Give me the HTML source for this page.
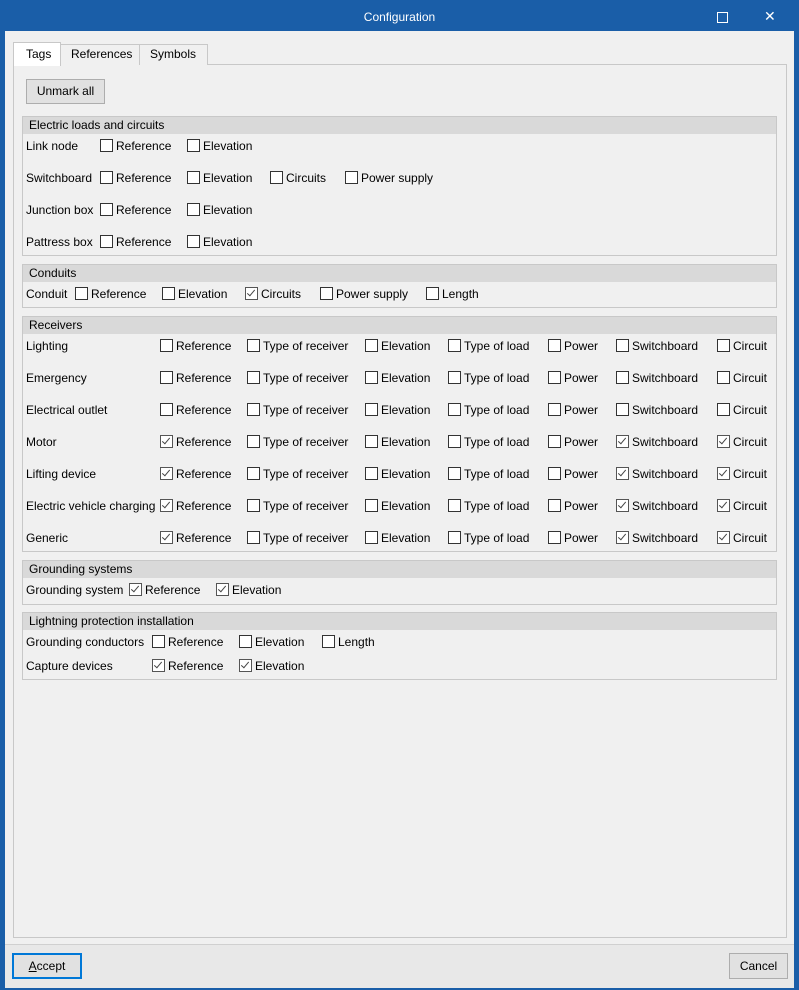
<!DOCTYPE html><html><head><style>
body{margin:0;width:799px;height:990px;background:#1a5ea8;font-family:"Liberation Sans",sans-serif;font-size:12px;color:#000;position:relative;overflow:hidden}
.a{position:absolute}
.win{left:5px;top:31px;width:789px;height:956px;background:#f0f0f0}
.t{position:absolute;white-space:nowrap;line-height:14px}
.cb{position:absolute;width:11px;height:11px;border:1px solid #333;background:#fff}
.cb.c{border-color:#555}
.cb.c::after{content:"";position:absolute;left:3px;top:0px;width:3px;height:7px;border:solid #444;border-width:0 1.5px 1.5px 0;transform:rotate(40deg)}
.gb{position:absolute;left:22px;width:753px;border:1px solid #c8c8c8}
.gh{height:17px;background:#d9d9d9;padding-left:6px;line-height:17px}
.btn{position:absolute;background:#e1e1e1;border:1px solid #adadad;text-align:center;line-height:20px}
</style></head><body>
<div class="t" style="left:0;width:799px;text-align:center;top:10px;color:#fff">Configuration</div>
<div class="a" style="left:717px;top:12px;width:9px;height:9px;border:1px solid #fff"></div>
<div class="t" style="left:764px;top:9px;color:#fff;font-size:14px">✕</div>
<div class="a win"></div>
<div class="a" style="left:13px;top:64px;width:772px;height:872px;border:1px solid #c8c8c8;background:#f0f0f0"></div>
<div class="a" style="left:13px;top:42px;width:46px;height:23px;border:1px solid #c8c8c8;border-bottom:none;background:#fff"></div>
<div class="t" style="left:26px;top:47px">Tags</div>
<div class="a" style="left:60px;top:44px;width:78px;height:20px;border:1px solid #c8c8c8;border-bottom:none;background:#f0f0f0"></div>
<div class="t" style="left:71px;top:47px">References</div>
<div class="a" style="left:139px;top:44px;width:67px;height:20px;border:1px solid #c8c8c8;border-bottom:none;background:#f0f0f0"></div>
<div class="t" style="left:150px;top:47px">Symbols</div>
<div class="btn" style="left:26px;top:79px;width:77px;height:23px;line-height:23px">Unmark all</div>
<div class="gb" style="top:116px;height:138px"><div class="gh">Electric loads and circuits</div></div>
<div class="gb" style="top:264px;height:42px"><div class="gh">Conduits</div></div>
<div class="gb" style="top:316px;height:234px"><div class="gh">Receivers</div></div>
<div class="gb" style="top:560px;height:43px"><div class="gh">Grounding systems</div></div>
<div class="gb" style="top:612px;height:66px"><div class="gh">Lightning protection installation</div></div>
<div id="c"></div>
<div class="a" style="left:5px;top:944px;width:789px;height:43px;background:#e8e8e8;border-top:1px solid #d0d0d0"></div>
<div class="btn" style="left:12px;top:953px;width:66px;height:22px;border:2px solid #0078d7;line-height:22px"><u>A</u>ccept</div>
<div class="btn" style="left:729px;top:953px;width:57px;height:24px;line-height:24px">Cancel</div>
<script>
var c=document.getElementById('c'),h='';
function row(y,label,lx,items){h+='<div class="t" style="left:'+lx+'px;top:'+(y-7)+'px">'+label+'</div>';
items.forEach(function(i){h+='<div class="cb'+(i[2]?' c':'')+'" style="left:'+i[0]+'px;top:'+(y-7)+'px"></div><div class="t" style="left:'+(i[0]+16)+'px;top:'+(y-7)+'px">'+i[1]+'</div>';});}
row(146,'Link node',26,[[100,'Reference'],[187,'Elevation']]);
row(178,'Switchboard',26,[[100,'Reference'],[187,'Elevation'],[270,'Circuits'],[345,'Power supply']]);
row(210,'Junction box',26,[[100,'Reference'],[187,'Elevation']]);
row(242,'Pattress box',26,[[100,'Reference'],[187,'Elevation']]);
row(294,'Conduit',26,[[75,'Reference'],[162,'Elevation'],[245,'Circuits',1],[320,'Power supply'],[426,'Length']]);
var R=[['Lighting',0],['Emergency',0],['Electrical outlet',0],['Motor',1],['Lifting device',1],['Electric vehicle charging',1],['Generic',1]];
R.forEach(function(r,k){var v=r[1];row(346+32*k,r[0],26,[[160,'Reference',v],[247,'Type of receiver'],[365,'Elevation'],[448,'Type of load'],[548,'Power'],[616,'Switchboard',v],[717,'Circuit',v]]);});
row(590,'Grounding system',26,[[129,'Reference',1],[216,'Elevation',1]]);
row(642,'Grounding conductors',26,[[152,'Reference'],[239,'Elevation'],[322,'Length']]);
row(666,'Capture devices',26,[[152,'Reference',1],[239,'Elevation',1]]);
c.innerHTML=h;
</script>
</body></html>
